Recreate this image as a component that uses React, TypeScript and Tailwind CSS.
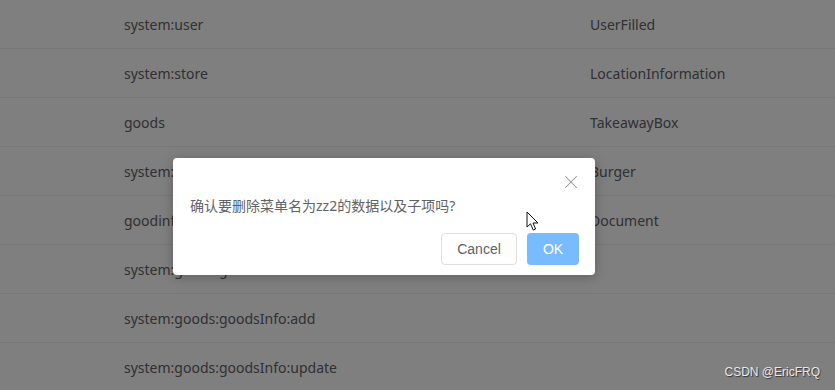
import { X } from "lucide-react";

const rows: [string, string][] = [
  ["system:user", "UserFilled"],
  ["system:store", "LocationInformation"],
  ["goods", "TakeawayBox"],
  ["system:goods", "Burger"],
  ["goodinfo", "Document"],
  ["system:goods:goodsInfo", ""],
  ["system:goods:goodsInfo:add", ""],
  ["system:goods:goodsInfo:update", ""],
];

const font = { fontFamily: '"Noto Sans", "Noto Sans CJK SC", sans-serif' };

function MenuTable() {
  return (
    <div className="w-full bg-white" style={font}>
      {rows.map(([perm, icon], i) => (
        <div key={i} className="flex h-[49px] items-center border-b border-[#ebeef5] text-[14px] text-[#606266]">
          <div className="w-[590px] pl-[124px]">{perm}</div>
          <div className="flex-1">{icon}</div>
        </div>
      ))}
    </div>
  );
}

function Cursor() {
  return (
    <svg className="absolute left-[526px] top-[211px]" width="14" height="22" viewBox="0 0 14 22">
      <path d="M1 1 L1 16 L4.5 12.8 L7.2 19 L9.6 18 L7 12 L12 12 Z" fill="#fff" stroke="#111" strokeWidth="1" strokeLinejoin="round" />
    </svg>
  );
}

function ConfirmBox() {
  return (
    <div
      className="ml-[173px] mt-[158px] h-[117px] w-[422px] rounded-[4px] bg-white pb-[10px] shadow-[0_2px_12px_rgba(0,0,0,0.25)]"
      style={font}
    >
      <div className="flex h-[36px] justify-end pr-[13px] pt-[13px]">
        <X className="h-[22px] w-[22px] text-[#909399]" strokeWidth={1.1} />
      </div>
      <div className="px-[17px] text-[14px] leading-[24px] text-[#606266]">
        确认要删除菜单名为zz2的数据以及子项吗?
      </div>
      <div className="mt-[15px] flex justify-end gap-[10px] pr-[16px]">
        <button className="h-[32px] w-[76px] rounded-[4px] border border-[#dcdfe6] bg-white text-[14px] text-[#606266]" style={{ fontFamily: '"Liberation Sans", Arial, sans-serif' }}>
          Cancel
        </button>
        <button className="h-[32px] w-[52px] rounded-[4px] bg-[#79bbff] text-[14px] text-white" style={{ fontFamily: '"Liberation Sans", Arial, sans-serif' }}>
          OK
        </button>
      </div>
    </div>
  );
}

export default function App() {
  return (
    <div className="relative h-[390px] w-[835px] overflow-hidden bg-white">
      <MenuTable />
      <div className="absolute inset-0 bg-black/50">
        <ConfirmBox />
      </div>
      <Cursor />
      <div
        className="absolute right-[15px] top-[363px] text-[12px] text-[#e8e8e8] [text-shadow:1px_1px_1px_rgba(0,0,0,0.6)]"
        style={{ fontFamily: '"Liberation Sans", Arial, sans-serif' }}
      >
        CSDN @EricFRQ
      </div>
    </div>
  );
}
